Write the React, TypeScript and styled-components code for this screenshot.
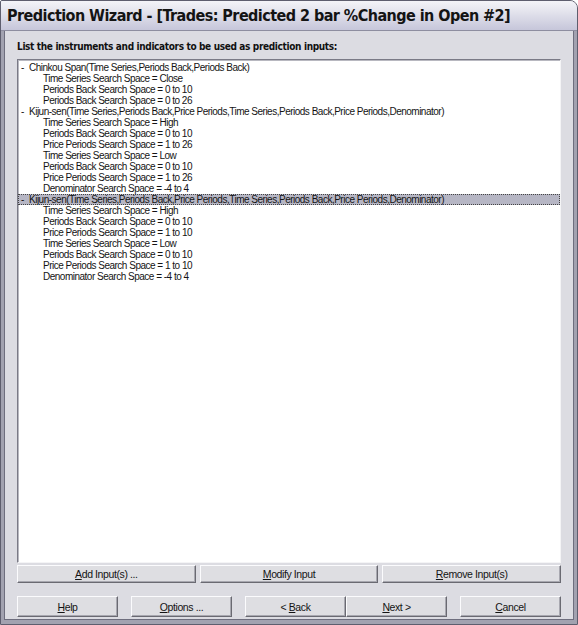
import React from "react";
import styled, { createGlobalStyle } from "styled-components";

const Global = createGlobalStyle`
  html, body { margin: 0; padding: 0; background: #ffffff; }
  body { width: 578px; height: 625px; overflow: hidden; }
`;

const Window = styled.div`
  box-sizing: border-box;
  width: 578px;
  height: 625px;
  display: flex;
  flex-direction: column;
  background: #dcdce2;
  border: 1px solid #5e5e6e;
  border-top-right-radius: 8px;
  border-top-left-radius: 2px;
  overflow: hidden;
  font-family: "Liberation Sans", Arial, sans-serif;
`;

const TitleBar = styled.div`
  height: 29px;
  flex: none;
  display: flex;
  align-items: center;
  padding-left: 6px;
  background: linear-gradient(#f4f4f8 0%, #e2e2ec 40%, #c6c6da 100%);
  border-bottom: 1px solid #8e8ea0;
`;

const Title = styled.div`
  font-family: "DejaVu Sans Condensed", "DejaVu Sans", sans-serif;
  font-weight: bold;
  font-size: 16px;
  letter-spacing: -0.55px;
  color: #141414;
  white-space: nowrap;
`;

const Frame = styled.div`
  flex: 1;
  display: flex;
  flex-direction: column;
  border-left: 3px solid #a2a2b0;
  border-right: 3px solid #a2a2b0;
  border-bottom: 4px solid #a2a2b0;
  box-shadow: inset 1px 0 0 #6e6e7e, inset -1px 0 0 #6e6e7e, inset 0 -1px 0 #6e6e7e;
  padding: 10px 13px 3px 13px;
`;

const Prompt = styled.div`
  font-family: "DejaVu Sans Condensed", "DejaVu Sans", sans-serif;
  font-weight: bold;
  font-size: 10px;
  letter-spacing: -0.35px;
  color: #111;
  height: 18px;
  line-height: 12px;
`;

const ListBox = styled.div`
  flex: 1;
  background: #ffffff;
  border-top: 1px solid #7a7a86;
  border-left: 1px solid #7a7a86;
  border-right: 1px solid #f4f4f6;
  border-bottom: 1px solid #f4f4f6;
  box-shadow: inset 1px 1px 0 #b8b8c0;
  padding-top: 2px;
`;

const Row = styled.div<{ $child?: boolean; $selected?: boolean }>`
  box-sizing: border-box;
  height: 11px;
  line-height: 11px;
  font-size: 10px;
  letter-spacing: -0.5px;
  color: #141414;
  white-space: nowrap;
  padding-left: ${(p) => (p.$child ? "25px" : "3px")};
  background: ${(p) => (p.$selected ? "#b6b6c4" : "transparent")};
  outline: ${(p) => (p.$selected ? "1px dotted #444" : "none")};
  outline-offset: -1px;
`;

const Dash = styled.span`
  display: inline-block;
  width: 8px;
`;

const ButtonRow = styled.div<{ $gap: number; $top: number }>`
  display: flex;
  gap: ${(p) => p.$gap}px;
  margin-top: ${(p) => p.$top}px;
`;

const Button = styled.button<{ $w?: number }>`
  box-sizing: border-box;
  ${(p) => (p.$w ? `width: ${p.$w}px;` : "flex: 1;")}
  height: ${(p) => (p.$w ? 21 : 18)}px;
  padding: 0;
  background: #dedee2;
  border-top: 1px solid #fbfbfd;
  border-left: 1px solid #fbfbfd;
  border-right: 1px solid #6a6a72;
  border-bottom: 1px solid #6a6a72;
  box-shadow: inset -1px -1px 0 #a8a8b0;
  font-family: "Liberation Sans", Arial, sans-serif;
  font-size: 10.5px;
  letter-spacing: -0.4px;
  color: #141414;
  u { text-decoration: underline; text-underline-offset: 1px; }
`;

const Spacer = styled.div<{ $w: number }>`
  width: ${(p) => p.$w}px;
  flex: none;
`;

type Item = { text: string; child?: boolean; selected?: boolean };

const items: Item[] = [
  { text: "Chinkou Span(Time Series,Periods Back,Periods Back)" },
  { text: "Time Series Search Space = Close", child: true },
  { text: "Periods Back Search Space = 0 to 10", child: true },
  { text: "Periods Back Search Space = 0 to 26", child: true },
  { text: "Kijun-sen(Time Series,Periods Back,Price Periods,Time Series,Periods Back,Price Periods,Denominator)" },
  { text: "Time Series Search Space = High", child: true },
  { text: "Periods Back Search Space = 0 to 10", child: true },
  { text: "Price Periods Search Space = 1 to 26", child: true },
  { text: "Time Series Search Space = Low", child: true },
  { text: "Periods Back Search Space = 0 to 10", child: true },
  { text: "Price Periods Search Space = 1 to 26", child: true },
  { text: "Denominator Search Space = -4 to 4", child: true },
  { text: "Kijun-sen(Time Series,Periods Back,Price Periods,Time Series,Periods Back,Price Periods,Denominator)", selected: true },
  { text: "Time Series Search Space = High", child: true },
  { text: "Periods Back Search Space = 0 to 10", child: true },
  { text: "Price Periods Search Space = 1 to 10", child: true },
  { text: "Time Series Search Space = Low", child: true },
  { text: "Periods Back Search Space = 0 to 10", child: true },
  { text: "Price Periods Search Space = 1 to 10", child: true },
  { text: "Denominator Search Space = -4 to 4", child: true },
];

export default function App() {
  return (
    <>
      <Global />
      <Window>
        <TitleBar>
          <Title>Prediction Wizard - [Trades: Predicted 2 bar %Change in Open #2]</Title>
        </TitleBar>
        <Frame>
          <Prompt>List the instruments and indicators to be used as prediction inputs:</Prompt>
          <ListBox>
            {items.map((it, i) => (
              <Row key={i} $child={it.child} $selected={it.selected}>
                {!it.child && <Dash>-</Dash>}
                {it.text}
              </Row>
            ))}
          </ListBox>
          <ButtonRow $gap={4} $top={2}>
            <Button><u>A</u>dd Input(s) ...</Button>
            <Button><u>M</u>odify Input</Button>
            <Button><u>R</u>emove Input(s)</Button>
          </ButtonRow>
          <ButtonRow $gap={0} $top={13}>
            <Button $w={101}><u>H</u>elp</Button>
            <Spacer $w={13} />
            <Button $w={101}><u>O</u>ptions ...</Button>
            <Spacer $w={13} />
            <Button $w={101}>&lt; <u>B</u>ack</Button>
            <Button $w={101}><u>N</u>ext &gt;</Button>
            <Spacer $w={13} />
            <Button $w={101}><u>C</u>ancel</Button>
          </ButtonRow>
        </Frame>
      </Window>
    </>
  );
}
